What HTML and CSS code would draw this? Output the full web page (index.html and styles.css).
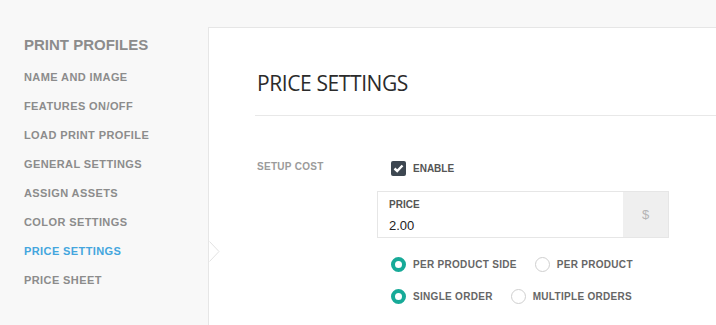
FILE: index.html
```html
<!DOCTYPE html>
<html lang="en">

<head>
	<meta charset="UTF-8">
	<meta name="viewport" content="width=device-width, initial-scale=1.0">
	<title>Price Settings</title>
	<link rel="stylesheet" href="styles.css">
</head>

<body>
	<div class="page">
		<ul class="sidebar">
			<li class="sidebar-title">PRINT PROFILES</li>
			<li class="sidebar-item">NAME AND IMAGE</li>
			<li class="sidebar-item">FEATURES ON/OFF</li>
			<li class="sidebar-item">LOAD PRINT PROFILE</li>
			<li class="sidebar-item">GENERAL SETTINGS</li>
			<li class="sidebar-item">ASSIGN ASSETS</li>
			<li class="sidebar-item">COLOR SETTINGS</li>
			<li class="sidebar-item active">PRICE SETTINGS
				<svg class="pointer" width="12" height="22" viewBox="0 0 12 22">
					<path d="M0 0 L10 10.5 L0 21 Z" fill="#fff" />
					<path d="M0.5 0.5 L10 10.5 L0.5 20.5" fill="none" stroke="#e2e2e2" stroke-width="1" />
				</svg>
			</li>
			<li class="sidebar-item">PRICE SHEET</li>
		</ul>

		<div class="panel">
			<h1 class="panel-title">PRICE SETTINGS</h1>
			<div class="divider"></div>

			<div class="form-row">
				<div class="form-label">SETUP COST</div>
				<div class="form-controls">
					<label class="check">
						<span class="check-box">
							<svg width="11" height="9" viewBox="0 0 11 9">
								<path d="M1.5 4.5 L4.2 7 L9.5 1.5" fill="none" stroke="#fff" stroke-width="2.4" />
							</svg>
						</span>
						ENABLE
					</label>

					<div class="price-box">
						<div class="price-field">
							<div class="price-label">PRICE</div>
							<div class="price-value">2.00</div>
						</div>
						<div class="price-addon">$</div>
					</div>

					<div class="radio-row first">
						<label class="radio"><span class="radio-dot checked"></span>PER PRODUCT SIDE</label>
						<label class="radio"><span class="radio-dot"></span>PER PRODUCT</label>
					</div>
					<div class="radio-row">
						<label class="radio"><span class="radio-dot checked"></span>SINGLE ORDER</label>
						<label class="radio"><span class="radio-dot"></span>MULTIPLE ORDERS</label>
					</div>
				</div>
			</div>
		</div>
	</div>
</body>

</html>
```

FILE: styles.css
```css
* {
	box-sizing: border-box;
}

body {
	margin: 0;
	background-color: #f8f8f8;
	font-family: 'Liberation Sans', Arial, sans-serif;
}

.page {
	display: flex;
	padding-top: 27px;
	height: 325px;
	overflow: hidden;
}

.sidebar {
	list-style: none;
	margin: 0;
	padding: 8px 0 0 24px;
	width: 208px;
	flex-shrink: 0;
}

.sidebar-title {
	font-size: 15px;
	font-weight: bold;
	line-height: 20px;
	color: #8c8c8c;
	margin-bottom: 8px;
}

.sidebar-item {
	position: relative;
	font-size: 11px;
	font-weight: bold;
	line-height: 29px;
	letter-spacing: 0.4px;
	color: #8c8c8c;
}

.sidebar-item.active {
	color: #44a6de;
}

.pointer {
	position: absolute;
	left: 185px;
	top: 4px;
}

.panel {
	flex: 1;
	background-color: #fff;
	border-top: 1px solid #e6e6e6;
	border-left: 1px solid #e6e6e6;
	padding: 41px 0 0 48px;
}

.panel-title {
	margin: 0;
	font-family: 'Open Sans', sans-serif;
	font-weight: normal;
	font-size: 21px;
	line-height: 28px;
	letter-spacing: -0.4px;
	color: #2b2b2b;
}

.divider {
	margin: 18px 0 0 -2px;
	border-top: 1px solid #e8e8e8;
}

.form-row {
	display: flex;
	margin-top: 45px;
}

.form-label {
	width: 120px;
	font-size: 10px;
	font-weight: bold;
	line-height: 12px;
	letter-spacing: 0.3px;
	color: #9b9b9b;
}

.form-controls {
	display: flex;
	flex-direction: column;
}

.check {
	display: flex;
	align-items: center;
	gap: 7px;
	padding-left: 14px;
	font-size: 10px;
	font-weight: bold;
	color: #555;
	height: 15px;
}

.check-box {
	width: 15px;
	height: 15px;
	border-radius: 2px;
	background-color: #3d4751;
	display: flex;
	align-items: center;
	justify-content: center;
}

.price-box {
	display: flex;
	width: 292px;
	height: 47px;
	margin-top: 15px;
	border: 1px solid #e6e6e6;
}

.price-field {
	flex: 1;
	padding: 7px 0 0 11px;
}

.price-label {
	font-size: 10px;
	font-weight: bold;
	line-height: 12px;
	color: #555;
}

.price-value {
	margin-top: 7px;
	font-size: 13px;
	line-height: 16px;
	color: #222;
}

.price-addon {
	width: 45px;
	background-color: #efefef;
	display: flex;
	align-items: center;
	justify-content: center;
	font-size: 13px;
	color: #b5b5b5;
}

.radio-row {
	display: flex;
	padding-left: 14px;
	margin-top: 17px;
	height: 15px;
}

.radio-row.first {
	margin-top: 19px;
}

.radio {
	display: flex;
	align-items: center;
	gap: 7px;
	margin-right: 18px;
	font-size: 10px;
	font-weight: bold;
	letter-spacing: 0.3px;
	color: #666;
}

.radio-dot {
	width: 15px;
	height: 15px;
	border-radius: 50%;
	border: 1px solid #cfcfcf;
	background-color: #fff;
}

.radio-dot.checked {
	border: 4px solid #17aa98;
}
```
